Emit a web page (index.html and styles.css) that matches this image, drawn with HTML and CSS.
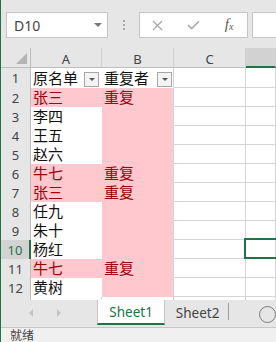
FILE: index.html
```html
<!DOCTYPE html>
<html lang="zh">
<head>
    <meta charset="UTF-8">
    <title>重复者</title>
    <link rel="stylesheet" href="styles.css">
</head>
<body>
    <div class="window">
        <div class="formula-bar">
            <div class="name-box">D10<span class="caret"></span></div>
            <div class="grip"><i></i><i></i><i></i></div>
            <div class="fx-buttons">
                <span class="fx-btn">
                    <svg width="11" height="11" viewBox="0 0 11 11"><path d="M1 1L10 10M10 1L1 10" stroke="#a8a8a8" stroke-width="1.3"/></svg>
                </span>
                <span class="fx-btn">
                    <svg width="13" height="10" viewBox="0 0 13 10"><path d="M1 5L4.6 8.6L12 1.2" fill="none" stroke="#a8a8a8" stroke-width="1.5"/></svg>
                </span>
                <span class="fx-btn fx">f<span class="fx-sub">x</span></span>
            </div>
            <div class="fx-input"></div>
        </div>

        <div class="sheet">
            <div class="grid">
                <div class="corner"><span class="corner-tri"></span></div>
                <div class="ch">A</div>
                <div class="ch">B</div>
                <div class="ch">C</div>
                <div class="ch active"></div>

                <div class="rh">1</div>
                <div class="cell col-a filled">原名单<span class="filter"></span></div>
                <div class="cell col-b filled">重复者<span class="filter"></span></div>
                <div class="cell"></div>
                <div class="cell"></div>

                <div class="rh">2</div>
                <div class="cell col-a dup">张三</div>
                <div class="cell col-b dup">重复</div>
                <div class="cell"></div>
                <div class="cell"></div>

                <div class="rh">3</div>
                <div class="cell col-a filled">李四</div>
                <div class="cell col-b dup"></div>
                <div class="cell"></div>
                <div class="cell"></div>

                <div class="rh">4</div>
                <div class="cell col-a filled">王五</div>
                <div class="cell col-b dup"></div>
                <div class="cell"></div>
                <div class="cell"></div>

                <div class="rh">5</div>
                <div class="cell col-a filled">赵六</div>
                <div class="cell col-b dup"></div>
                <div class="cell"></div>
                <div class="cell"></div>

                <div class="rh">6</div>
                <div class="cell col-a dup">牛七</div>
                <div class="cell col-b dup">重复</div>
                <div class="cell"></div>
                <div class="cell"></div>

                <div class="rh">7</div>
                <div class="cell col-a dup">张三</div>
                <div class="cell col-b dup">重复</div>
                <div class="cell"></div>
                <div class="cell"></div>

                <div class="rh">8</div>
                <div class="cell col-a filled">任九</div>
                <div class="cell col-b dup"></div>
                <div class="cell"></div>
                <div class="cell"></div>

                <div class="rh">9</div>
                <div class="cell col-a filled">朱十</div>
                <div class="cell col-b dup"></div>
                <div class="cell"></div>
                <div class="cell"></div>

                <div class="rh active">10</div>
                <div class="cell col-a filled">杨红</div>
                <div class="cell col-b dup"></div>
                <div class="cell"></div>
                <div class="cell"></div>

                <div class="rh">11</div>
                <div class="cell col-a dup">牛七</div>
                <div class="cell col-b dup">重复</div>
                <div class="cell"></div>
                <div class="cell"></div>

                <div class="rh">12</div>
                <div class="cell col-a filled">黄树</div>
                <div class="cell col-b dup"></div>
                <div class="cell"></div>
                <div class="cell"></div>

                <div class="rh"></div>
                <div class="cell"></div>
                <div class="cell"></div>
                <div class="cell"></div>
                <div class="cell"></div>
            </div>
            <div class="selection"></div>
        </div>

        <div class="tabs">
            <div class="tab-nav">
                <span class="nav-arrow left"></span>
                <span class="nav-arrow right"></span>
            </div>
            <div class="tab current">Sheet1</div>
            <div class="tab">Sheet2</div>
            <span class="tab-sep"></span>
            <span class="add-sheet"></span>
        </div>

        <div class="status">就绪</div>
    </div>
</body>
</html>
```

FILE: styles.css
```css
* {
    box-sizing: border-box;
}

body {
    margin: 0;
    background: #e6e6e6;
    font-family: "Noto Sans", sans-serif;
}

.window {
    width: 276px;
    height: 342px;
    overflow: hidden;
    display: flex;
    flex-direction: column;
    border-left: 1px solid #217346;
    background: #e6e6e6;
}

/* formula bar */
.formula-bar {
    flex: none;
    height: 48px;
    display: flex;
    align-items: flex-start;
    padding: 12px 0 0 5px;
}

.name-box {
    width: 102px;
    height: 26px;
    display: flex;
    align-items: center;
    padding-left: 7px;
    background: #fff;
    border: 1px solid #c6c6c6;
    font-size: 14px;
    color: #444;
}

.caret {
    margin-left: auto;
    margin-right: 5px;
    width: 0;
    height: 0;
    border-left: 4px solid transparent;
    border-right: 4px solid transparent;
    border-top: 4px solid #777;
}

.grip {
    width: 31px;
    height: 26px;
    display: flex;
    flex-direction: column;
    align-items: center;
    justify-content: center;
    gap: 2px;
}

.grip i {
    width: 2px;
    height: 2px;
    background: #a8a8a8;
}

.fx-buttons {
    width: 109px;
    height: 26px;
    display: flex;
    background: #fff;
    border: 1px solid #c6c6c6;
}

.fx-btn {
    width: 36px;
    display: flex;
    align-items: center;
    justify-content: center;
}

.fx {
    font-family: "Liberation Serif", serif;
    font-style: italic;
    font-size: 15px;
    color: #5a5a5a;
    padding-bottom: 2px;
}

.fx-sub {
    font-size: 10px;
    position: relative;
    top: 2px;
}

.fx-input {
    flex: 1;
    height: 26px;
    margin-left: 4px;
    background: #fff;
    border: 1px solid #c6c6c6;
    border-right: 0;
}

/* grid */
.sheet {
    flex: none;
    position: relative;
    height: 252px;
    overflow: hidden;
    background: #fff;
}

.grid {
    display: grid;
    grid-template-columns: 30px 71px 72px 72px 30px;
    grid-template-rows: 20px 20px repeat(12, 19px) 19px;
}

.corner {
    display: flex;
    align-items: flex-end;
    justify-content: flex-end;
    padding: 0 3px 3px 0;
    background: #e6e6e6;
    border-right: 1px solid #bdbdbd;
    border-bottom: 1px solid #bdbdbd;
}

.corner-tri {
    width: 0;
    height: 0;
    border-left: 11px solid transparent;
    border-bottom: 11px solid #b4b4b4;
}

.ch {
    display: flex;
    align-items: center;
    justify-content: center;
    padding-top: 2px;
    background: #e6e6e6;
    border-right: 1px solid #d0d0d0;
    border-bottom: 1px solid #bdbdbd;
    font-size: 13px;
    color: #444;
}

.ch.active {
    background: #d2d2d2;
    border-bottom: 2px solid #217346;
}

.rh {
    display: flex;
    align-items: center;
    justify-content: center;
    background: #e6e6e6;
    border-right: 1px solid #bdbdbd;
    font-size: 13px;
    color: #444;
}

.rh.active {
    background: #d2d2d2;
    color: #217346;
    border-right: 2px solid #217346;
}

.cell {
    display: flex;
    align-items: center;
    padding-left: 2px;
    background: #fff;
    border-right: 1px solid #d4d4d4;
    border-bottom: 1px solid #d4d4d4;
    font-family: "Noto Sans CJK SC", sans-serif;
    font-size: 15px;
    line-height: 18px;
    color: #111;
    white-space: nowrap;
}

.cell.filled,
.cell.dup {
    border-bottom-color: transparent;
}

.cell.col-a {
    border-right-color: transparent;
}

.cell.dup {
    background: #ffc7ce;
    color: #9c0006;
}

.filter {
    width: 15px;
    height: 15px;
    margin-left: auto;
    margin-right: 2px;
    align-self: flex-end;
    display: flex;
    align-items: center;
    justify-content: center;
    background: #f3f3f3;
    border: 1px solid #a6a6a6;
}

.col-b .filter {
    margin-right: 1px;
}

.filter::after {
    content: "";
    width: 0;
    height: 0;
    border-left: 3px solid transparent;
    border-right: 3px solid transparent;
    border-top: 3px solid #555;
}

.selection {
    position: absolute;
    left: 243px;
    top: 190px;
    width: 40px;
    height: 21px;
    border: 2px solid #217346;
}

/* sheet tabs */
.tabs {
    flex: none;
    height: 28px;
    display: flex;
    align-items: flex-start;
    background: #e6e6e6;
    border-bottom: 1px solid #c6c6c6;
}

.tab-nav {
    width: 100px;
    height: 25px;
    display: flex;
    align-items: center;
    padding-left: 28px;
    gap: 24px;
}

.nav-arrow {
    width: 0;
    height: 0;
    border-top: 4px solid transparent;
    border-bottom: 4px solid transparent;
}

.nav-arrow.left {
    border-right: 4px solid #c4c4c4;
}

.nav-arrow.right {
    border-left: 4px solid #c4c4c4;
}

.tab {
    width: 66px;
    height: 25px;
    display: flex;
    align-items: center;
    padding-left: 11px;
    font-size: 13.5px;
    color: #444;
}

.tab.current {
    width: 71px;
    justify-content: center;
    padding: 0;
    background: #fff;
    color: #217346;
    border-left: 1px solid #c6c6c6;
    border-right: 1px solid #c6c6c6;
    border-bottom: 2px solid #217346;
}

.tab-sep {
    width: 1px;
    height: 17px;
    margin-top: 3px;
    background: #9e9e9e;
}

.add-sheet {
    width: 17px;
    height: 17px;
    margin: 6px 0 0 30px;
    flex: none;
    border: 1px solid #7a7a7a;
    border-radius: 50%;
}

/* status bar */
.status {
    flex: 1;
    padding: 0 0 0 9px;
    background: #f0f0f0;
    font-family: "Noto Sans CJK SC", sans-serif;
    font-size: 12px;
    line-height: 13px;
    color: #444;
}
```
